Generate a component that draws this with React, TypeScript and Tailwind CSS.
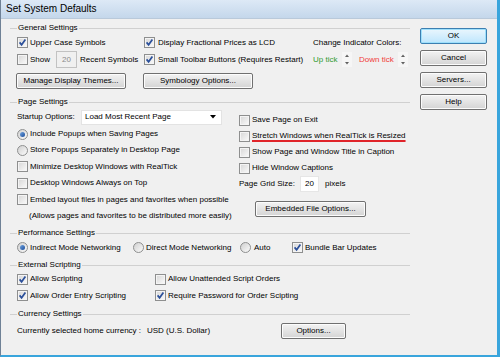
import React from 'react'

function Check({ checked = false }: { checked?: boolean }) {
  return (
    <span className="relative inline-block w-[11px] h-[11px] shrink-0 border border-[#8e8f8f] bg-gradient-to-br from-[#d6d6d6] to-[#fbfbfb] shadow-[inset_0_0_0_1px_#f4f4f4]">
      {checked && (
        <svg className="absolute inset-0" width="9" height="9" viewBox="0 0 9 9">
          <path d="M1.6 4.4 L3.6 6.8 L7.4 1.6" fill="none" stroke="#2a4f9a" strokeWidth="1.7" />
        </svg>
      )}
    </span>
  )
}

function Radio({ checked = false }: { checked?: boolean }) {
  return (
    <span className="relative inline-flex items-center justify-center w-[11px] h-[11px] shrink-0 rounded-full border border-[#8e8f8f] bg-gradient-to-br from-[#d0d0d0] to-[#fbfbfb]">
      {checked && <span className="w-[5px] h-[5px] rounded-full bg-gradient-to-br from-[#6fa3e0] to-[#1d4d9a]" />}
    </span>
  )
}

function Btn({ label, className = '', primary = false }: { label: string; className?: string; primary?: boolean }) {
  return (
    <div
      className={
        'flex items-center justify-center h-[16px] rounded-[2px] border ' +
        (primary
          ? 'border-[#3c7fb1] bg-gradient-to-b from-[#eaf6fd] to-[#bee6fd] shadow-[inset_0_0_0_1px_#9ee0fc] '
          : 'border-[#707070] bg-gradient-to-b from-[#f3f3f3] to-[#d4d4d4] shadow-[inset_0_0_0_1px_#fcfcfc] ') +
        className
      }
    >
      {label}
    </div>
  )
}

function Legend({ title, className = '' }: { title: string; className?: string }) {
  return (
    <div className={'flex items-center h-[12px] ' + className}>
      <div className="w-[7px] h-px bg-[#d0d0d0]" />
      <span className="px-[1px]">{title}</span>
      <div className="flex-1 h-px bg-[#d0d0d0]" />
    </div>
  )
}

function Spinner() {
  return (
    <svg width="10" height="15" viewBox="0 0 10 15" className="shrink-0">
      <rect x="0" y="0" width="10" height="15" fill="#f6f6f6" />
      <path d="M3 5 L5 2.5 L7 5 Z" fill="#606060" />
      <path d="M3 10 L5 12.5 L7 10 Z" fill="#606060" />
    </svg>
  )
}

function Item({ children, className = '' }: { children: React.ReactNode; className?: string }) {
  return <div className={'flex items-center gap-[2px] ' + className}>{children}</div>
}

export default function App() {
  return (
    <div className="w-[500px] h-[357px] flex flex-col overflow-hidden bg-[#f0f0f0] border-l border-l-[#6f8196] border-r-[3px] border-r-[#39a5dc] border-b-2 border-b-[#39a5dc] font-['Liberation_Sans',Arial,sans-serif] text-[8px] text-black leading-none">
      {/* Title bar */}
      <div className="h-[19px] shrink-0 flex items-center pl-[5px] text-[10px] bg-gradient-to-b from-[#dde9f6] to-[#c4d7eb] border-b border-b-[#b9c9da]">
        Set System Defaults
      </div>

      <div className="flex-1 flex">
        {/* Left column */}
        <div className="w-[409px] pl-[9px] pt-[3px]">
          <Legend title="General Settings" />
          <div className="pl-[7px]">
            <div className="flex items-center h-[17px]">
              <Item className="w-[127px]">
                <Check checked />
                <span>Upper Case Symbols</span>
              </Item>
              <Item className="w-[169px]">
                <Check checked />
                <span className="ml-[1px]">Display Fractional Prices as LCD</span>
              </Item>
              <span>Change Indicator Colors:</span>
            </div>
            <div className="flex items-center h-[17px]">
              <Item className="w-[127px]">
                <Check />
                <span className="w-[24px]">Show</span>
                <span className="flex items-center justify-center w-[21px] h-[17px] border border-[#c2c2c2] text-[#8a8a8a]">20</span>
                <span className="ml-[1px]">Recent Symbols</span>
              </Item>
              <Item className="w-[169px]">
                <Check checked />
                <span className="ml-[1px]">Small Toolbar Buttons (Requires Restart)</span>
              </Item>
              <div className="flex items-center">
                <span className="w-[29px] text-[#2f9a2f]">Up tick</span>
                <Spinner />
                <span className="ml-[7px] w-[39px] text-[#f03a3a]">Down tick</span>
                <Spinner />
              </div>
            </div>
            <div className="flex items-center gap-[17px] mt-[5px] -ml-[1px]">
              <Btn label="Manage Display Themes..." className="w-[110px]" />
              <Btn label="Symbology Options..." className="w-[110px]" />
            </div>
          </div>

          <Legend title="Page Settings" className="mt-[7px]" />
          <div className="flex pl-[7px]">
            <div className="w-[222px]">
              <div className="flex items-center h-[18px]">
                <span className="w-[64px]">Startup Options:</span>
                <div className="flex items-center justify-between w-[141px] h-[15px] bg-white border border-[#e3e3e3] pl-[3px] pr-[5px]">
                  <span>Load Most Recent Page</span>
                  <svg width="6" height="4" viewBox="0 0 6 4">
                    <path d="M0 0 L6 0 L3 3.5 Z" fill="#000" />
                  </svg>
                </div>
              </div>
              <Item className="h-[16px]">
                <Radio checked />
                <span>Include Popups when Saving Pages</span>
              </Item>
              <Item className="h-[16px]">
                <Radio />
                <span>Store Popups Separately in Desktop Page</span>
              </Item>
              <Item className="h-[17px]">
                <Check />
                <span>Minimize Desktop Windows with RealTick</span>
              </Item>
              <Item className="h-[16px]">
                <Check />
                <span>Desktop Windows Always on Top</span>
              </Item>
              <Item className="h-[17px]">
                <Check />
                <span>Embed layout files in pages and favorites when possible</span>
              </Item>
              <div className="flex items-center h-[16px] pl-[12px]">
                (Allows pages and favorites to be distributed more easily)
              </div>
            </div>
            <div className="pt-[4px]">
              <Item className="h-[16px]">
                <Check />
                <span>Save Page on Exit</span>
              </Item>
              <Item className="h-[16px]">
                <Check />
                <span className="underline decoration-[#e0242a] decoration-[1.5px] underline-offset-[2px]">
                  Stretch Windows when RealTick is Resized
                </span>
              </Item>
              <Item className="h-[16px]">
                <Check />
                <span>Show Page and Window Title in Caption</span>
              </Item>
              <Item className="h-[16px]">
                <Check />
                <span>Hide Window Captions</span>
              </Item>
              <div className="flex items-center h-[16px]">
                <span className="w-[61px]">Page Grid Size:</span>
                <span className="flex items-center justify-center w-[19px] h-[16px] bg-white border border-[#e6e6e6]">20</span>
                <span className="ml-[6px]">pixels</span>
              </div>
              <Btn label="Embedded File Options..." className="w-[111px] ml-[16px] mt-[9px]" />
            </div>
          </div>

          <Legend title="Performance Settings" className="mt-[3px]" />
          <div className="flex items-center h-[17px] pl-[7px]">
            <Item className="w-[116px]">
              <Radio checked />
              <span>Indirect Mode Networking</span>
            </Item>
            <Item className="w-[107px]">
              <Radio />
              <span>Direct Mode Networking</span>
            </Item>
            <Item className="w-[52px]">
              <Radio />
              <span className="ml-[1px]">Auto</span>
            </Item>
            <Item>
              <Check checked />
              <span>Bundle Bar Updates</span>
            </Item>
          </div>

          <Legend title="External Scripting" className="mt-[3px]" />
          <div className="pl-[7px]">
            <div className="flex items-center h-[16px]">
              <Item className="w-[138px]">
                <Check checked />
                <span>Allow Scripting</span>
              </Item>
              <Item>
                <Check />
                <span>Allow Unattended Script Orders</span>
              </Item>
            </div>
            <div className="flex items-center h-[17px]">
              <Item className="w-[138px]">
                <Check checked />
                <span>Allow Order Entry Scripting</span>
              </Item>
              <Item>
                <Check checked />
                <span>Require Password for Order Scipting</span>
              </Item>
            </div>
          </div>

          <Legend title="Currency Settings" className="mt-[4px]" />
          <div className="flex items-center h-[17px] pl-[7px] mt-[2px]">
            <span className="w-[130px]">Currently selected home currency :</span>
            <span className="w-[134px]">USD (U.S. Dollar)</span>
            <Btn label="Options..." className="w-[65px]" />
          </div>
        </div>

        {/* Right column */}
        <div className="ml-[10px] pt-[9px] flex flex-col gap-[6px]">
          <Btn label="OK" primary className="w-[67px]" />
          <Btn label="Cancel" className="w-[67px]" />
          <Btn label="Servers..." className="w-[67px]" />
          <Btn label="Help" className="w-[67px]" />
        </div>
      </div>
    </div>
  )
}
